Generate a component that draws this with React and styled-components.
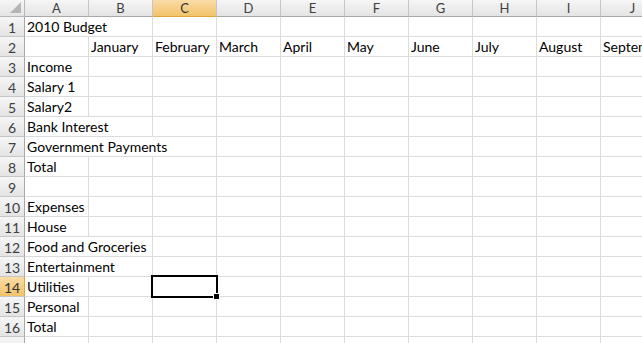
import React from "react"
import styled, { createGlobalStyle, css } from "styled-components"

const GlobalStyle = createGlobalStyle`
  html, body {
    margin: 0;
    padding: 0;
    background: #fff;
  }
  body {
    font-family: Lato, "Open Sans", sans-serif;
    overflow: hidden;
  }
`

const COLS = ["A", "B", "C", "D", "E", "F", "G", "H", "I", "J"]
const ACTIVE_COL = 2
const ACTIVE_ROW = 14

const rows = [
  { n: 1, cells: { 0: { text: "2010 Budget", span: 2 } } },
  {
    n: 2,
    cells: {
      1: { text: "January" },
      2: { text: "February" },
      3: { text: "March" },
      4: { text: "April" },
      5: { text: "May" },
      6: { text: "June" },
      7: { text: "July" },
      8: { text: "August" },
      9: { text: "September" },
    },
  },
  { n: 3, cells: { 0: { text: "Income" } } },
  { n: 4, cells: { 0: { text: "Salary 1" } } },
  { n: 5, cells: { 0: { text: "Salary2" } } },
  { n: 6, cells: { 0: { text: "Bank Interest", span: 2 } } },
  { n: 7, cells: { 0: { text: "Government Payments", span: 3 } } },
  { n: 8, cells: { 0: { text: "Total" } } },
  { n: 9, cells: {} },
  { n: 10, cells: { 0: { text: "Expenses" } } },
  { n: 11, cells: { 0: { text: "House" } } },
  { n: 12, cells: { 0: { text: "Food and Groceries", span: 2 } } },
  { n: 13, cells: { 0: { text: "Entertainment", span: 2 } } },
  { n: 14, cells: { 0: { text: "Utilities" } } },
  { n: 15, cells: { 0: { text: "Personal" } } },
  { n: 16, cells: { 0: { text: "Total" } } },
  { n: 17, cells: {} },
]

const Sheet = styled.div`
  display: grid;
  grid-template-columns: 25px repeat(10, 64px);
  grid-template-rows: 17px;
  grid-auto-rows: 20px;
  width: 642px;
  height: 343px;
  overflow: hidden;
`

const headerBg = css`
  background: linear-gradient(#f6f6f6, #e4e4e4);
  color: #3f3f3f;
  font-size: 13px;
  display: flex;
  align-items: center;
  justify-content: center;
  box-sizing: border-box;
`

const activeBg = css`
  background: linear-gradient(#f9dca6, #f2c36a);
  color: #333;
`

const Corner = styled.div`
  ${headerBg};
  position: relative;
  border-right: 1px solid #b8b8b8;
  border-bottom: 1px solid #b8b8b8;

  &::after {
    content: "";
    position: absolute;
    right: 3px;
    bottom: 3px;
    width: 0;
    height: 0;
    border-left: 11px solid transparent;
    border-bottom: 11px solid #b5b5b5;
  }
`

const ColHead = styled.div`
  ${headerBg};
  border-right: 1px solid #c6c6c6;
  border-bottom: 1px solid #a8a8a8;
  ${(p) => p.$active && activeBg};
  ${(p) => p.$active && "border-bottom-color: #e3a53a;"}
`

const RowHead = styled.div`
  ${headerBg};
  padding-top: 1px;
  font-size: 14px;
  border-right: 1px solid #a8a8a8;
  border-bottom: 1px solid #c6c6c6;
  ${(p) => p.$active && activeBg};
  ${(p) => p.$active && "border-right-color: #e3a53a;"}
`

const Cell = styled.div`
  grid-column: span ${(p) => p.$span || 1};
  box-sizing: border-box;
  position: relative;
  border-right: 1px solid #dadcdd;
  border-bottom: 1px solid #dadcdd;
  padding: 0 2px;
  font-size: 14px;
  color: #000;
  white-space: nowrap;
  overflow: hidden;
  display: flex;
  align-items: flex-end;
  padding-bottom: 1px;
  line-height: 17px;
`

const Selection = styled.div`
  position: absolute;
  left: -2px;
  top: -2px;
  right: -2px;
  bottom: -2px;
  border: 2px solid #000;
  pointer-events: none;
  z-index: 2;

  &::after {
    content: "";
    position: absolute;
    right: -4px;
    bottom: -4px;
    width: 5px;
    height: 5px;
    background: #000;
    border: 1px solid #fff;
  }
`

const ActiveCell = styled(Cell)`
  overflow: visible;
  z-index: 2;
`

function renderRow(row) {
  const out = [
    <RowHead key={`h${row.n}`} $active={row.n === ACTIVE_ROW}>
      {row.n}
    </RowHead>,
  ]
  let c = 0
  while (c < COLS.length) {
    const cell = row.cells[c]
    const span = cell && cell.span ? cell.span : 1
    const active = row.n === ACTIVE_ROW && c === ACTIVE_COL
    if (active) {
      out.push(
        <ActiveCell key={`${row.n}-${c}`}>
          <Selection />
        </ActiveCell>
      )
    } else {
      out.push(
        <Cell key={`${row.n}-${c}`} $span={span}>
          {cell ? cell.text : ""}
        </Cell>
      )
    }
    c += span
  }
  return out
}

const App = () => (
  <>
    <GlobalStyle />
    <Sheet>
      <Corner />
      {COLS.map((col, i) => (
        <ColHead key={col} $active={i === ACTIVE_COL}>
          {col}
        </ColHead>
      ))}
      {rows.map(renderRow)}
    </Sheet>
  </>
)

export default App
